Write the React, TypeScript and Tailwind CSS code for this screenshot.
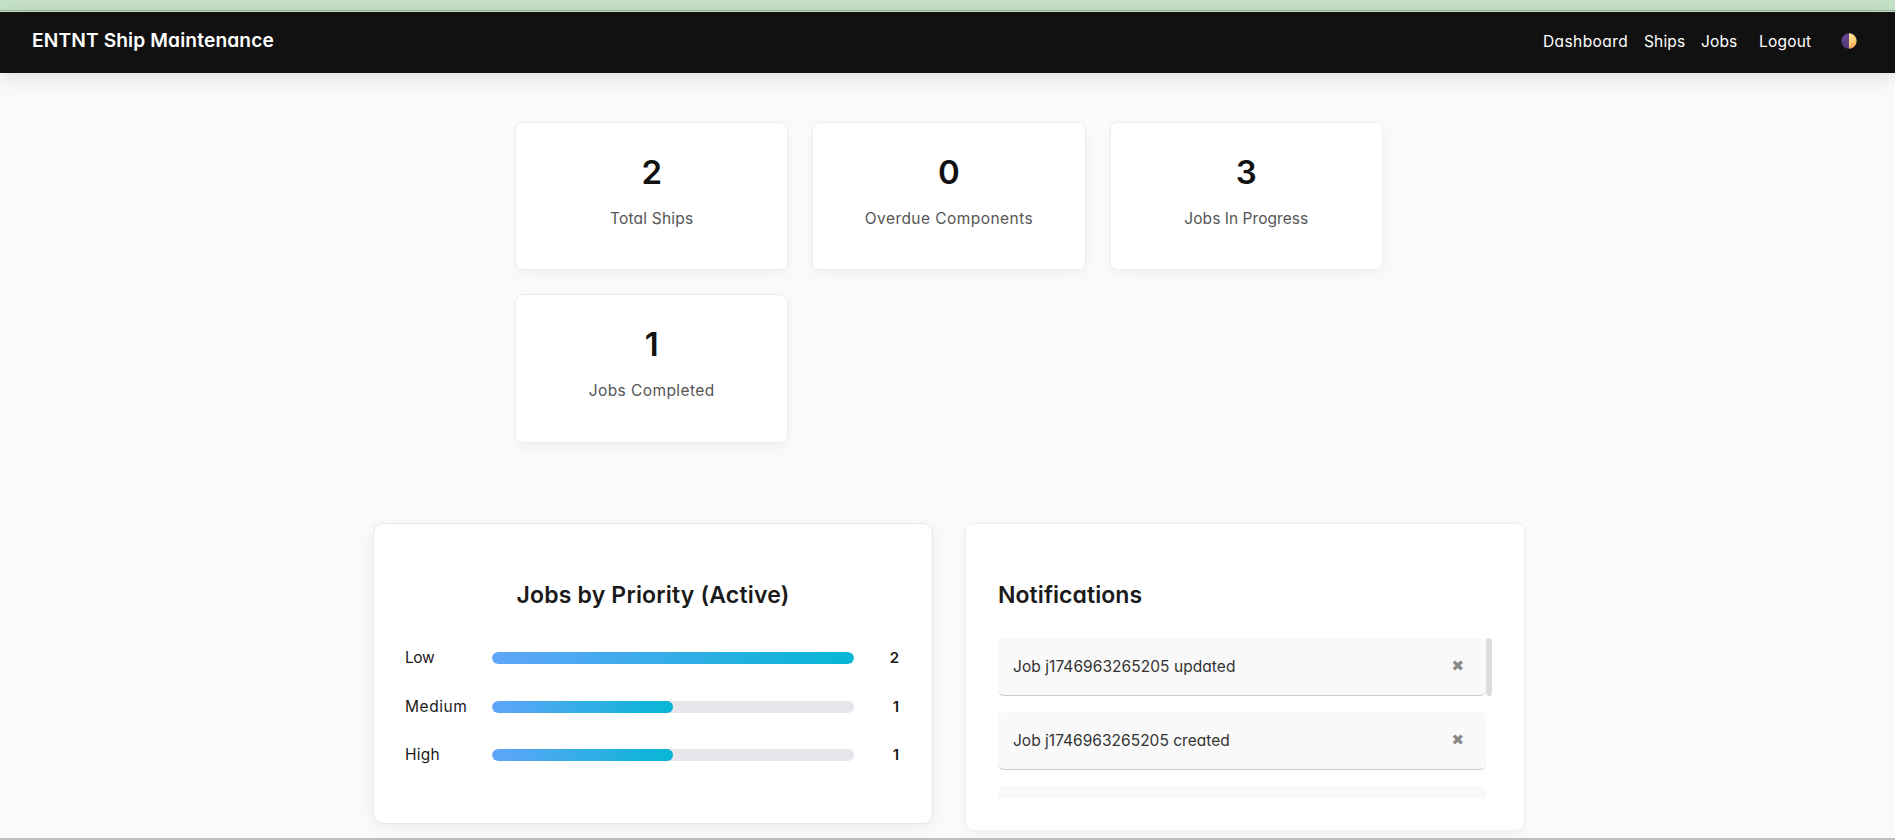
const stats = [
  { value: "2", label: "Total Ships", tracking: "tracking-[0.2px]" },
  { value: "0", label: "Overdue Components", tracking: "tracking-[0.45px]" },
  { value: "3", label: "Jobs In Progress", tracking: "tracking-[0.05px]" },
  { value: "1", label: "Jobs Completed", tracking: "tracking-[0.42px]" },
];

const priorities = [
  { name: "Low", count: 2, tracking: "tracking-[-0.4px]" },
  { name: "Medium", count: 1, tracking: "tracking-[0.55px]" },
  { name: "High", count: 1, tracking: "tracking-[0.2px]" },
];

const notifications = [
  { text: "Job j1746963265205 updated", tracking: "tracking-[0.06px]" },
  { text: "Job j1746963265205 created", tracking: "tracking-[0.02px]" },
];

function HalfMoon() {
  return (
    <svg viewBox="0 0 16 16" className="size-4">
      <defs>
        <linearGradient id="moonLit" x1="0" y1="0" x2="0.3" y2="1">
          <stop offset="0" stopColor="#ffe9a0" />
          <stop offset="0.6" stopColor="#fbd27c" />
          <stop offset="1" stopColor="#f5a55a" />
        </linearGradient>
      </defs>
      <path d="M8 .3a7.7 7.7 0 0 0 0 15.4z" fill="#5c3f86" />
      <path d="M8 .3a7.7 7.7 0 0 1 0 15.4z" fill="url(#moonLit)" />
      <circle cx="4.2" cy="5" r="1.2" fill="#6f519b" />
      <circle cx="3.5" cy="10.3" r="1.1" fill="#493070" />
      <circle cx="6.1" cy="12.6" r="1" fill="#493070" />
      <circle cx="11.5" cy="10.8" r="1" fill="#f7b867" />
    </svg>
  );
}

function Navbar() {
  return (
    <nav className="relative flex h-[61px] shrink-0 items-center bg-[#111] pr-[38px] pl-8 text-white shadow-[0_4px_20px_rgba(0,0,0,0.12)]">
      <span className="-mt-1 text-[19.2px] font-semibold tracking-[0.12px]">ENTNT Ship Maintenance</span>
      <div className="-mt-1 ml-auto flex items-center text-[15.5px]">
        <a className="mt-0.5 w-[101px] tracking-[0.42px]">Dashboard</a>
        <a className="mt-0.5 w-[57px] tracking-[0.15px]">Ships</a>
        <a className="mt-0.5 w-[58px] tracking-[0.15px]">Jobs</a>
        <a className="mt-0.5 w-[82px] tracking-[0.2px]">Logout</a>
        <HalfMoon />
      </div>
    </nav>
  );
}

function StatCard({ value, label, tracking }: (typeof stats)[number]) {
  return (
    <div className="flex flex-col items-center rounded-lg border border-[#eee] bg-white pt-[25px] shadow-[0_4px_12px_rgba(0,0,0,0.04)]">
      <div className="text-[33px] leading-[48px] font-semibold text-[#111]">{value}</div>
      <div className={`mt-2.5 text-[15.5px] leading-[25px] text-[#555] ${tracking}`}>{label}</div>
    </div>
  );
}

function PriorityPanel() {
  const max = Math.max(...priorities.map((p) => p.count));
  return (
    <section className="h-[301px] w-[560px] rounded-[10px] border border-[#e5e7eb] bg-white px-8 pt-[53px] shadow-[0_4px_16px_rgba(0,0,0,0.05)]">
      <h2 className="text-center text-[23px] leading-9 font-semibold tracking-[0.18px]">Jobs by Priority (Active)</h2>
      <div className="mt-[33px] flex flex-col gap-[24.5px]">
        {priorities.map((p) => (
          <div key={p.name} className="flex h-6 items-center text-[15.5px] leading-6">
            <span className={`-ml-px w-[87px] ${p.tracking}`}>{p.name}</span>
            <div className="h-3 w-[362px] overflow-hidden rounded-full bg-[#e5e7eb]">
              <div
                className="h-full rounded-full bg-[linear-gradient(to_right,#60a5fa,#06b6d4)]"
                style={{ width: `${(p.count / max) * 100}%` }}
              />
            </div>
            <span className="flex-1 pr-px text-right text-[15px] font-semibold">{p.count}</span>
          </div>
        ))}
      </div>
    </section>
  );
}

function NotificationsPanel() {
  return (
    <section className="h-[308px] w-[560px] rounded-lg border border-[#eee] bg-white px-8 pt-[53px] shadow-[0_4px_12px_rgba(0,0,0,0.04)]">
      <h2 className="text-[23px] leading-9 font-semibold tracking-[0.07px]">Notifications</h2>
      <div className="mt-[25px] flex h-40 items-start overflow-hidden">
        <ul className="flex w-[488px] flex-col gap-4">
          {notifications.map((n) => (
            <li
              key={n.text}
              className="flex h-[58px] shrink-0 items-center justify-between rounded-md border-b border-[#ccc] bg-[#f9f9f9] pr-[22px] pl-[15px] text-[15.5px] text-[#333]"
            >
              <span className={n.tracking}>{n.text}</span>
              <button className="-mt-0.5 font-['DejaVu_Sans'] text-[15px] leading-5 text-[#888]">✖</button>
            </li>
          ))}
          <li className="h-[58px] shrink-0 rounded-md border-b border-[#ccc] bg-[#f9f9f9]" />
        </ul>
        <div className="h-[58px] w-1.5 rounded-full bg-[#ddd]" />
      </div>
    </section>
  );
}

export default function App() {
  return (
    <div className="flex h-[840px] flex-col overflow-hidden bg-[#f9fafc] font-['Inter','Liberation_Sans',sans-serif] text-[#1a1a1a] [font-feature-settings:'cv11']">
      <div className="h-[12px] shrink-0 bg-[#c6e2c6]">
        <div className="h-[11px] border-b border-[#9bb59b]" />
      </div>
      <Navbar />
      <main className="min-h-0 flex-1 overflow-hidden pl-[3px]">
        <div className="mx-auto mt-[49px] grid w-[868px] grid-cols-3 grid-rows-[148px_149px] gap-6">
          {stats.map((s) => (
            <StatCard key={s.label} {...s} />
          ))}
        </div>
        <div className="mt-20 flex items-start justify-center gap-8">
          <PriorityPanel />
          <NotificationsPanel />
        </div>
      </main>
      <div className="h-0.5 shrink-0 bg-[#bdbdbd]" />
    </div>
  );
}
